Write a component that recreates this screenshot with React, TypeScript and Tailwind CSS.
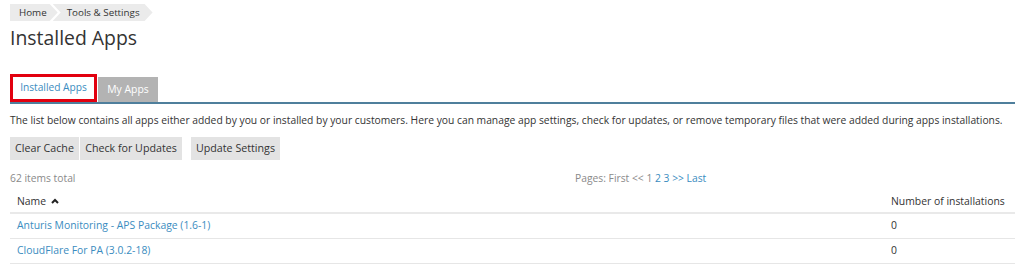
import { useState } from "react";

const font = "font-['Open_Sans',sans-serif]";

const apps = [
  { name: "Anturis Monitoring - APS Package (1.6-1)", count: 0 },
  { name: "CloudFlare For PA (3.0.2-18)", count: 0 },
];

export default function App() {
  const [tab, setTab] = useState("installed");

  return (
    <div className={`${font} h-[265px] w-full overflow-hidden bg-white px-[10px] pt-[4px] text-[#333]`}>
      {/*BREADCRUMBS*/}
      <div className="flex h-[17px] text-[9.8px] leading-[17px]">
        <span className="bg-[#ebebeb] pl-[9px] pr-[11px] [clip-path:polygon(0_0,calc(100%-8px)_0,100%_50%,calc(100%-8px)_100%,0_100%)]">
          Home
        </span>
        <span className="-ml-[5px] bg-[#ebebeb] pl-[14px] pr-[13px] [clip-path:polygon(0_0,calc(100%-8px)_0,100%_50%,calc(100%-8px)_100%,0_100%,8px_50%)]">
          Tools &amp; Settings
        </span>
      </div>

      {/*PAGE TITLE*/}
      <h1 className="mt-[4px] text-[19.4px] leading-[26px] font-normal text-[#333]">Installed Apps</h1>

      {/*TABS*/}
      <div className="mt-[23px] flex items-end border-b-[2px] border-[#4f7f9c]">
        <button
          onClick={() => setTab("installed")}
          className="h-[28px] w-[87px] border-[3px] border-[#e2000f] bg-white text-[10.2px] text-[#3a8cc0]"
        >
          Installed Apps
        </button>
        <button
          onClick={() => setTab("mine")}
          className="ml-[1px] h-[25px] w-[60px] bg-[#b3b3b3] text-[10.4px] text-white"
        >
          My Apps
        </button>
      </div>

      {/*DESCRIPTION*/}
      <p className="mt-[8px] whitespace-nowrap text-[10.3px] leading-[16px]">
        The list below contains all apps either added by you or installed by your customers. Here you can manage app
        settings, check for updates, or remove temporary files that were added during apps installations.
      </p>

      {/*TOOLBAR*/}
      <div className="mt-[9px] flex h-[23px] text-[10.7px]">
        <button className="w-[69px] bg-[#e3e3e3]">Clear Cache</button>
        <button className="ml-[1px] w-[102px] bg-[#e3e3e3]">Check for Updates</button>
        <button className="ml-[9px] w-[89px] bg-[#e3e3e3]">Update Settings</button>
      </div>

      {/*LIST INFO AND PAGER*/}
      <div className="relative mt-[10px] h-[17px] text-[10.3px] leading-[17px] text-[#8a8a8a]">
        <span>62 items total</span>
        <span className="absolute left-[565px] top-0">
          Pages: First &lt;&lt; 1 <a className="text-[#3a8cc0]">2</a> <a className="text-[#3a8cc0]">3</a>{" "}
          <a className="text-[#3a8cc0]">&gt;&gt;</a> <a className="text-[#3a8cc0]">Last</a>
        </span>
      </div>

      {/*TABLE*/}
      <table className="mt-[4px] w-full border-collapse text-[10.4px]">
        <thead>
          <tr className="h-[22px] border-b-[2px] border-[#e9e9e9] text-left">
            <th className="pl-[7px] font-normal">
              <span className="inline-flex items-center gap-[5px]">
                Name
                <svg width="8" height="6" viewBox="0 0 8 6">
                  <path d="M1 5 L4 2 L7 5" fill="none" stroke="#222" strokeWidth="2" />
                </svg>
              </span>
            </th>
            <th className="w-[124px] font-normal">Number of installations</th>
          </tr>
        </thead>
        <tbody>
          {apps.map((app) => (
            <tr key={app.name} className="h-[25px] border-b border-[#e6e6e6]">
              <td className="pl-[7px] text-[#3a8cc0]">{tab === "installed" ? app.name : ""}</td>
              <td>{app.count}</td>
            </tr>
          ))}
        </tbody>
      </table>
    </div>
  );
}
